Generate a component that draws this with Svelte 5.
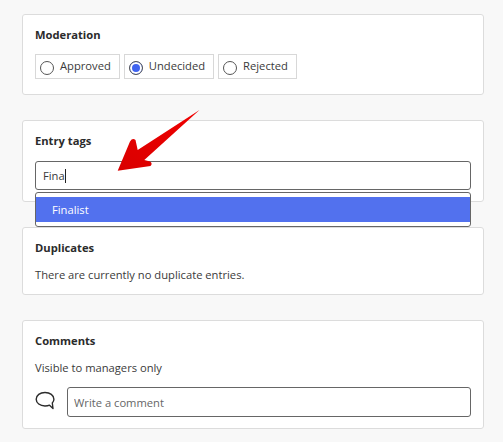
<script>
  let tag = $state('Fina')
  let comment = $state('')
  let moderation = $state('undecided')

  const options = [
    { value: 'approved', label: 'Approved' },
    { value: 'undecided', label: 'Undecided' },
    { value: 'rejected', label: 'Rejected' }
  ]
</script>

<div class="page">
  <section class="card mod">
    <h3>Moderation</h3>
    <div class="radios">
      {#each options as opt}
        <label class="radio">
          <span class="dot" class:on={moderation === opt.value}></span>
          <input type="radio" name="moderation" value={opt.value} bind:group={moderation} />
          {opt.label}
        </label>
      {/each}
    </div>
  </section>

  <section class="card tags">
    <h3>Entry tags</h3>
    <div class="field">
      <div class="tag-input">{tag}<span class="caret"></span></div>
      <div class="menu">
        <div class="item">Finalist</div>
      </div>
    </div>
    <svg class="arrow" width="95" height="70" viewBox="0 0 95 70">
      <defs>
        <linearGradient id="red" x1="0" y1="1" x2="1" y2="0">
          <stop offset="0" stop-color="#d90000" />
          <stop offset="1" stop-color="#f00000" />
        </linearGradient>
      </defs>
      <path d="M7.700 65.700 L20 36.500 Q22.500 32.500 25.500 35 L27.700 45 L89.500 5 L34.300 55 L40 56.500 Q43 58.500 40.500 61 Z" fill="url(#red)" />
    </svg>
  </section>

  <section class="card">
    <h3>Duplicates</h3>
    <p>There are currently no duplicate entries.</p>
  </section>

  <section class="card">
    <h3>Comments</h3>
    <p>Visible to managers only</p>
    <div class="comment-row">
      <svg class="bubble" width="20" height="20" viewBox="0 0 20 20">
        <path d="M10 2.500 C5 2.500 1.200 5.200 1.200 9.200 C1.200 13 5 16 10 16 C11.600 16 13.200 15.800 14.500 15.200 L18 18.500 L17.300 13 C18.300 11.900 18.900 10.600 18.900 9.200 C18.900 5.200 15 2.500 10 2.500 Z" fill="none" stroke="#2b2b2b" stroke-width="1.400" stroke-linejoin="round" />
      </svg>
      <input class="comment" type="text" placeholder="Write a comment" bind:value={comment} />
    </div>
  </section>
</div>

<style>
  :global(body) {
    margin: 0;
    background: #f8f8f8;
  }

  .page {
    padding: 14px 19.5px 0 22px;
    font-family: "Open Sans", sans-serif;
    font-size: 11.2px;
    color: #3a3a3a;
    height: 428px;
    overflow: hidden;
  }

  .card {
    position: relative;
    background: #fff;
    border: 1px solid #dcdcdc;
    border-radius: 3px;
    padding: 12px 12px 11px;
    margin-bottom: 25px;
  }

  .mod {
    padding-bottom: 15px;
  }

  h3 {
    margin: 0 0 11px;
    font-size: 11.2px;
    line-height: 16px;
    font-weight: 700;
    color: #2b2b2b;
  }

  p {
    margin: 0;
    line-height: 16px;
    color: #3a3a3a;
  }

  .radios {
    display: flex;
    gap: 4px;
  }

  .radio {
    display: flex;
    align-items: center;
    gap: 6px;
    height: 21px;
    padding: 0 8px 2px 4px;
    border: 1px solid #d8d8d8;
  }

  .radio input {
    display: none;
  }

  .dot {
    box-sizing: border-box;
    width: 14px;
    height: 14px;
    margin-top: 5px;
    border: 1px solid #555;
    border-radius: 50%;
    background: #fff;
  }

  .dot.on {
    background: #3f63f0;
    box-shadow: inset 0 0 0 2px #fff;
  }

  .tags h3 {
    margin-bottom: 12px;
  }

  .field {
    position: relative;
  }

  .tag-input {
    box-sizing: border-box;
    height: 29px;
    padding: 0 7px;
    line-height: 27px;
    background: #fff;
    border: 1px solid #666;
    border-radius: 3px;
  }

  .caret {
    display: inline-block;
    width: 1px;
    height: 14px;
    background: #222;
    vertical-align: -3px;
  }

  .menu {
    position: absolute;
    top: 31px;
    left: 0;
    right: 0;
    z-index: 2;
    padding: 4px 0;
    background: #fff;
    border: 1px solid #666;
    border-radius: 3px;
  }

  .item {
    height: 25px;
    line-height: 25px;
    padding-left: 16px;
    background: #5271ee;
    color: #fff;
  }

  .arrow {
    position: absolute;
    left: 87px;
    top: -16px;
    z-index: 3;
  }

  .comment-row {
    display: flex;
    align-items: flex-start;
    gap: 12px;
    margin-top: 11px;
  }

  .bubble {
    flex: none;
    margin-top: 3px;
  }

  .comment {
    flex: 1;
    box-sizing: border-box;
    min-width: 0;
    height: 30px;
    padding: 0 6px;
    background: #fff;
    border: 1px solid #666;
    border-radius: 3px;
    font: inherit;
    color: #3a3a3a;
  }

  .comment::placeholder {
    color: #666;
    opacity: 1;
  }
</style>
